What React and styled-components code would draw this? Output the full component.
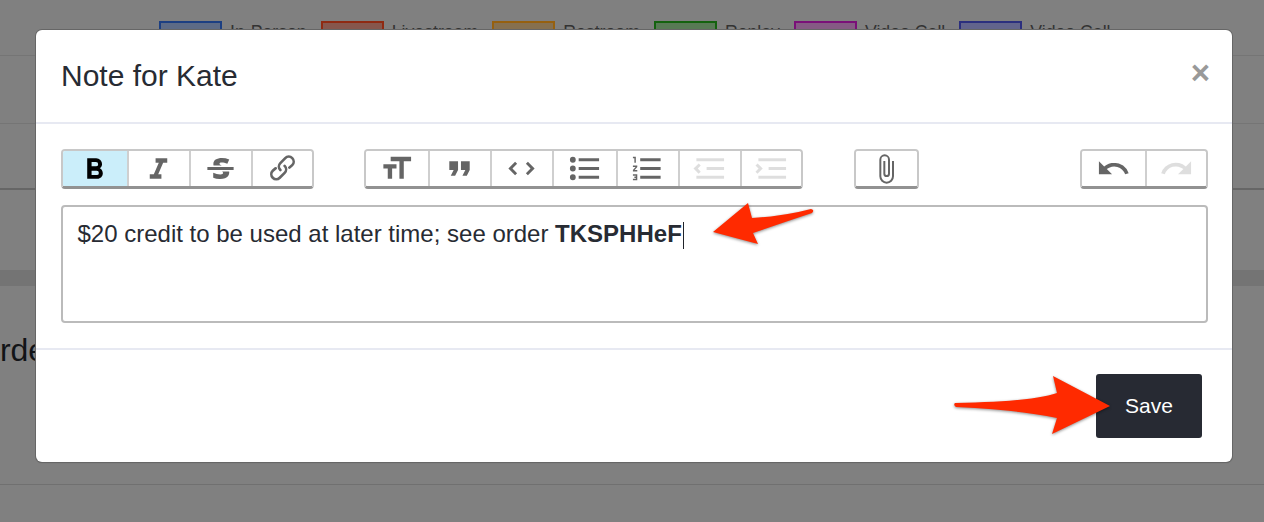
import React from "react";
import styled, { createGlobalStyle } from "styled-components";

const ICONS = {
  bold: "M15.6 11.8c1-.7 1.6-1.8 1.6-2.8a4 4 0 0 0-4-4H7v14h7c2.1 0 3.7-1.7 3.7-3.8 0-1.5-.8-2.8-2.1-3.4zM10 7.5h3a1.5 1.5 0 1 1 0 3h-3v-3zm3.5 9H10v-3h3.5a1.5 1.5 0 1 1 0 3z",
  italic: "M10 5v3h2.2l-3.4 8H6v3h8v-3h-2.2l3.4-8H18V5h-8z",
  strike:
    "M12.73 14l.28.14c.26.15.45.3.57.44.12.14.18.3.18.5 0 .3-.15.56-.44.75-.3.2-.76.3-1.39.3A13.52 13.52 0 0 1 7 14.95v3.37a10.64 10.64 0 0 0 4.84.88c1.26 0 2.35-.19 3.28-.56.93-.37 1.64-.9 2.14-1.57s.74-1.45.74-2.32c0-.26-.02-.51-.06-.75h-5.21zm-5.5-4c-.08-.34-.12-.7-.12-1.1 0-1.29.52-2.3 1.58-3.02 1.05-.72 2.5-1.08 4.34-1.08 1.62 0 3.28.34 4.97 1l-1.3 2.93c-1.47-.6-2.73-.9-3.8-.9-.55 0-.96.08-1.2.26-.26.17-.38.38-.38.64 0 .27.16.52.48.74.17.12.53.3 1.05.53H7.23zM3 13h18v-2H3v2z",
  link: "M9.88 13.7a4.3 4.3 0 0 1 0-6.07l3.37-3.37a4.26 4.26 0 0 1 6.07 0 4.3 4.3 0 0 1 0 6.06l-1.96 1.72a.91.91 0 1 1-1.3-1.3l1.97-1.71a2.46 2.46 0 0 0-3.48-3.48l-3.38 3.37a2.46 2.46 0 0 0 0 3.48.91.91 0 1 1-1.3 1.3zM14.12 9.56a4.3 4.3 0 0 1 0 6.07l-3.37 3.37a4.26 4.26 0 0 1-6.07 0 4.3 4.3 0 0 1 0-6.06l1.96-1.72a.91.91 0 1 1 1.3 1.3l-1.97 1.71a2.46 2.46 0 0 0 3.48 3.48l3.38-3.37a2.46 2.46 0 0 0 0-3.48.91.91 0 1 1 1.3-1.3z",
  heading: "M12 9v3H9v7H6v-7H3V9h9zM8 4h14v3h-5v12h-3V7H8V4z",
  quote: "M6 17h3l2-4V7H5v6h3zm8 0h3l2-4V7h-6v6h3z",
  code: "M18.2 12L15 15.2l1.4 1.4L21 12l-4.6-4.6L15 8.8l3.2 3.2zM5.8 12L9 8.8 7.6 7.4 3 12l4.6 4.6L9 15.2 5.8 12z",
  bullets:
    "M4 4a2 2 0 1 0 0 4 2 2 0 0 0 0-4zm0 6a2 2 0 1 0 0 4 2 2 0 0 0 0-4zm0 6a2 2 0 1 0 0 4 2 2 0 0 0 0-4zm4 3h14v-2H8v2zm0-6h14v-2H8v2zm0-8v2h14V5H8z",
  numbers:
    "M2 17h2v.5H3v1h1v.5H2v1h3v-4H2v1zm1-9h1V4H2v1h1v3zm-1 3h1.8L2 13.1v.9h3v-1H3.2L5 10.9V10H2v1zm5-6v2h14V5H7zm0 14h14v-2H7v2zm0-6h14v-2H7v2z",
  outdent: "M3 19h19v-2H3v2zm7-6h12v-2H10v2zm-8.3-.3l2.8 2.9L6 14.2 4 12l2-2-1.4-1.5L1 12l.7.7zM3 5v2h19V5H3z",
  indent: "M3 19h19v-2H3v2zm7-6h12v-2H10v2zm-6.9-1L1 14.2l1.4 1.4L6 12l-.7-.7-2.8-2.8L1 9.9 3.1 12zM3 5v2h19V5H3z",
  attach:
    "M16.5 6v11.5a4 4 0 1 1-8 0V5a2.5 2.5 0 0 1 5 0v10.5a1 1 0 1 1-2 0V6H10v9.5a2.5 2.5 0 0 0 5 0V5a4 4 0 1 0-8 0v12.5a5.5 5.5 0 0 0 11 0V6h-1.5z",
  undo: "M12.5 8c-2.6 0-5 1-6.9 2.6L2 7v9h9l-3.6-3.6A8 8 0 0 1 20 16l2.4-.8a10.5 10.5 0 0 0-10-7.2z",
  redo: "M18.4 10.6a10.5 10.5 0 0 0-16.9 4.6L4 16a8 8 0 0 1 12.7-3.6L13 16h9V7l-3.6 3.6z",
};

const TOOL_GROUPS = [
  [
    { icon: "bold", w: 64, active: true },
    { icon: "italic", w: 62 },
    { icon: "strike", w: 62 },
    { icon: "link", w: 61 },
  ],
  [
    { icon: "heading", w: 62 },
    { icon: "quote", w: 62 },
    { icon: "code", w: 62 },
    { icon: "bullets", w: 64 },
    { icon: "numbers", w: 62 },
    { icon: "outdent", w: 62, disabled: true },
    { icon: "indent", w: 61, disabled: true },
  ],
  [{ icon: "attach", w: 61, size: 32 }],
  [
    { icon: "undo", w: 63 },
    { icon: "redo", w: 61, disabled: true },
  ],
];

const LEGEND = [
  { label: "In-Person", border: "#1c3f82", fill: "#5d6b86" },
  { label: "Livestream", border: "#8f2a12", fill: "#86574d" },
  { label: "Restroom", border: "#96600f", fill: "#86704f" },
  { label: "Replay", border: "#14620f", fill: "#587a55" },
  { label: "Video Call", border: "#7a0f78", fill: "#855a84" },
  { label: "Video Call", border: "#2b2f7e", fill: "#62648c" },
];

const App = () => {
  return (
    <Page>
      <GlobalStyle />
      <Backdrop>
        <Legend>
          {LEGEND.map((item, i) => (
            <LegendItem key={i}>
              <Swatch $border={item.border} $fill={item.fill} />
              <span>{item.label}</span>
            </LegendItem>
          ))}
        </Legend>
        <BackRow $height={68} $line="#757575" />
        <BackRow $height={66} $line="#666" />
        <BackBand />
        <BackRow $height={199} $line="#707070">
          <OrderTitle>Order</OrderTitle>
        </BackRow>
      </Backdrop>

      <Modal>
        <ModalHeader>
          <Title>Note for Kate</Title>
          <Close>×</Close>
        </ModalHeader>
        <ModalBody>
          <Toolbar>
            {TOOL_GROUPS.map((group, i) => (
              <ToolGroup key={i}>
                {group.map((tool) => (
                  <ToolButton key={tool.icon} $w={tool.w} $active={tool.active}>
                    <ToolIcon
                      viewBox="0 0 24 24"
                      $size={tool.size}
                      $active={tool.active}
                      $disabled={tool.disabled}
                    >
                      <path d={ICONS[tool.icon]} />
                    </ToolIcon>
                  </ToolButton>
                ))}
              </ToolGroup>
            ))}
          </Toolbar>
          <Editor>
            $20 credit to be used at later time; see order <strong>TKSPHHeF</strong>
            <Caret />
          </Editor>
        </ModalBody>
        <ModalFooter>
          <SaveButton>Save</SaveButton>
        </ModalFooter>
      </Modal>

      <Arrows viewBox="0 0 1264 522">
        <path d="M713 232 L748 203 L752 218 Q785 216 811 209 Q815 210 812 213 Q785 222 753 233 L758 244 Z" />
        <path d="M955 403 Q1030 402 1057 393 L1053 376 L1110 406 L1052 434 L1057 418 Q1020 410 956 407 Q953 405 955 403 Z" />
      </Arrows>
    </Page>
  );
};

const GlobalStyle = createGlobalStyle`
  html, body {
    margin: 0;
    padding: 0;
    background: #808080;
  }
  * {
    box-sizing: border-box;
  }
`;

const Page = styled.div`
  position: relative;
  width: 1264px;
  height: 522px;
  overflow: hidden;
  background: #808080;
  font-family: "Liberation Sans", Arial, sans-serif;
  color: #272b33;
`;

const Backdrop = styled.div`
  display: flex;
  flex-direction: column;
`;

const Legend = styled.div`
  display: flex;
  height: 56px;
  padding: 21px 0 0 159px;
  border-bottom: 1px solid #757575;
  gap: 14px;
  font-size: 17.7px;
  color: #333;
`;

const LegendItem = styled.div`
  display: flex;
  gap: 8px;
  line-height: 22px;
`;

const Swatch = styled.i`
  display: block;
  width: 63px;
  height: 24px;
  border: 2px solid ${(p) => p.$border};
  background: ${(p) => p.$fill};
`;

const BackRow = styled.div`
  height: ${(p) => p.$height}px;
  border-bottom: ${(p) => (p.$line === "#666" ? "2px" : "1px")} solid ${(p) => p.$line};
`;

const BackBand = styled.div`
  height: 16px;
  margin-top: 80px;
  background: #747474;
`;

const OrderTitle = styled.div`
  margin: 44px 0 0 -25px;
  font-size: 32px;
  line-height: 40px;
  color: #121417;
`;

const Modal = styled.div`
  position: absolute;
  left: 36px;
  top: 30px;
  width: 1196px;
  height: 432px;
  display: flex;
  flex-direction: column;
  background: #fff;
  border-radius: 6px;
  box-shadow: 0 0 0 1px #666, 0 1px 1px #5f5f5f;
`;

const ModalHeader = styled.div`
  height: 94px;
  display: flex;
  align-items: center;
  justify-content: space-between;
  padding: 0 22px 0 25px;
  border-bottom: 2px solid #e7e9f2;
`;

const Title = styled.h5`
  margin: 0;
  font-size: 30px;
  font-weight: 400;
  line-height: 36px;
  color: #272b33;
`;

const Close = styled.span`
  margin-bottom: 6px;
  font-size: 33px;
  font-weight: 700;
  line-height: 36px;
  color: #999;
`;

const ModalBody = styled.div`
  display: flex;
  flex-direction: column;
  gap: 16px;
  padding: 25px 24.5px;
  border-bottom: 2px solid #e7e9f2;
`;

const Toolbar = styled.div`
  display: flex;
  gap: 50px;
  height: 40px;
  & > :nth-child(3) {
    margin-left: 1px;
  }
  & > :last-child {
    margin-left: auto;
  }
`;

const ToolGroup = styled.div`
  display: flex;
  border: 2px solid #c8c8c8;
  border-bottom: 3px solid #929292;
  border-radius: 4px;
  overflow: hidden;
`;

const ToolButton = styled.div`
  width: ${(p) => p.$w}px;
  display: flex;
  align-items: center;
  justify-content: center;
  background: ${(p) => (p.$active ? "#cbeefa" : "#fff")};
  & + & {
    border-left: 2px solid #cfcfcf;
  }
`;

const ToolIcon = styled.svg`
  width: ${(p) => p.$size || 35}px;
  height: ${(p) => p.$size || 35}px;
  fill: #000;
  opacity: ${(p) => (p.$active ? 1 : p.$disabled ? 0.125 : 0.6)};
`;

const Editor = styled.div`
  height: 118px;
  padding: 12px 15px;
  border: 2px solid #bbb;
  border-radius: 4px;
  font-size: 24px;
  line-height: 30px;
  color: #272b33;
`;

const Caret = styled.span`
  display: inline-block;
  width: 1.5px;
  height: 27px;
  margin-left: 1px;
  vertical-align: -7px;
  background: #20232a;
`;

const ModalFooter = styled.div`
  flex: 1;
  display: flex;
  align-items: flex-start;
  justify-content: flex-end;
  padding: 24px 30px 0 0;
`;

const SaveButton = styled.button`
  width: 106px;
  height: 64px;
  border: 0;
  border-radius: 3px;
  background: #272a33;
  color: #fff;
  font-family: inherit;
  font-size: 21px;
`;

const Arrows = styled.svg`
  position: absolute;
  left: 0;
  top: 0;
  width: 1264px;
  height: 522px;
  pointer-events: none;
  fill: #ff2a00;
  filter: drop-shadow(0 1px 1.5px rgba(0, 0, 0, 0.45));
`;

export default App;
